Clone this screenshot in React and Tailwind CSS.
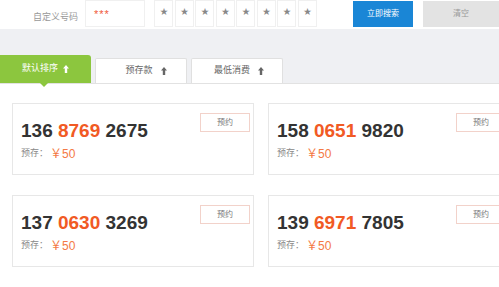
import React from 'react';

const font = { fontFamily: '"Liberation Sans", "Noto Sans CJK SC", sans-serif' };

const numbers = [
  { a: '136', b: '8769', c: '2675' },
  { a: '158', b: '0651', c: '9820' },
  { a: '137', b: '0630', c: '3269' },
  { a: '139', b: '6971', c: '7805' },
];

function UpArrow({ className }) {
  return (
    <svg width="6" height="8" viewBox="0 0 6 8" className={className}>
      <path d="M3 0 L6 3.5 L4.2 3.5 L4.2 8 L1.8 8 L1.8 3.5 L0 3.5 Z" fill="currentColor" />
    </svg>
  );
}

function Card({ n }) {
  return (
    <div className="h-[72px] w-[242px] border border-[#e7e7e7] bg-white flex justify-between pl-[8px] pr-[3px]">
      <div className="pt-[17px]">
        <div className="text-[19px] leading-[19px] font-bold text-[#333] whitespace-nowrap">
          {n.a} <span className="text-[#f15a24]">{n.b}</span> {n.c}
        </div>
        <div className="mt-[5px] flex items-center whitespace-nowrap">
          <span className="text-[9px] text-[#888]">预存：</span>
          <span className="ml-[2px] text-[12px] text-[#f47a45]">￥50</span>
        </div>
      </div>
      <div className="pt-[9px]">
        <div className="w-[50px] h-[19px] border border-[#f2d2ca] flex items-center justify-center text-[8px] text-[#777]">
          预约
        </div>
      </div>
    </div>
  );
}

export default function App() {
  return (
    <div style={font} className="w-[499px] h-[287px] overflow-hidden bg-white">
      {/* search bar */}
      <div className="h-[29px] flex items-start">
        <div className="pl-[33px] pt-[11px] text-[9px] text-[#999] whitespace-nowrap">自定义号码</div>
        <div className="ml-[7px] w-[63px] h-[27px] border border-[#f0f0f0] pl-[8px] pt-[5px] text-[11px] text-[#f05a3c] tracking-[1px]">
          ***
        </div>
        <div className="ml-[9px] flex gap-[1.5px]">
          {Array.from({ length: 8 }).map((_, i) => (
            <div key={i} className="w-[19px] h-[27px] border border-[#f0f0f0] flex items-center justify-center text-[8px] text-[#888] pb-[3px]">
              ★
            </div>
          ))}
        </div>
        <div className="ml-[36px] mt-[1px] w-[63px] h-[26px] bg-[#1a86d6] text-white text-[8px] flex items-center justify-center whitespace-nowrap">
          立即搜索
        </div>
        <div className="ml-[10px] mt-[1px] w-[80px] h-[26px] bg-[#e3e3e3] text-[#999] text-[8px] flex items-center justify-center">
          清空
        </div>
      </div>

      {/* tabs band */}
      <div className="h-[55px] bg-[#eff0f3] border-b border-[#e2e2e2] flex items-end gap-[4px]">
        <div className="relative w-[91px] h-[28px] bg-[#8cc63e] rounded-tr-[3px] flex items-center justify-center gap-[5px] text-white text-[9px]">
          <span>默认排序</span>
          <UpArrow />
          <div className="absolute left-[40px] bottom-[-4px] w-0 h-0 border-l-[4px] border-r-[4px] border-t-[4px] border-l-transparent border-r-transparent border-t-[#8cc63e]" />
        </div>
        <div className="w-[92px] h-[25px] bg-white border border-b-0 border-[#e0e0e0] rounded-t-[2px] flex items-center justify-center gap-[8px] text-[#666] text-[9px]">
          <span className="ml-[10px]">预存款</span>
          <UpArrow className="text-[#666]" />
        </div>
        <div className="w-[92px] h-[25px] bg-white border border-b-0 border-[#e0e0e0] rounded-t-[2px] flex items-center justify-center gap-[8px] text-[#666] text-[9px]">
          <span className="ml-[4px]">最低消费</span>
          <UpArrow className="text-[#666]" />
        </div>
      </div>

      {/* cards */}
      <div className="pt-[19px] pl-[12px] grid grid-cols-[242px_242px] gap-x-[14px] gap-y-[20px]">
        {numbers.map((n, i) => (
          <Card key={i} n={n} />
        ))}
      </div>
    </div>
  );
}
